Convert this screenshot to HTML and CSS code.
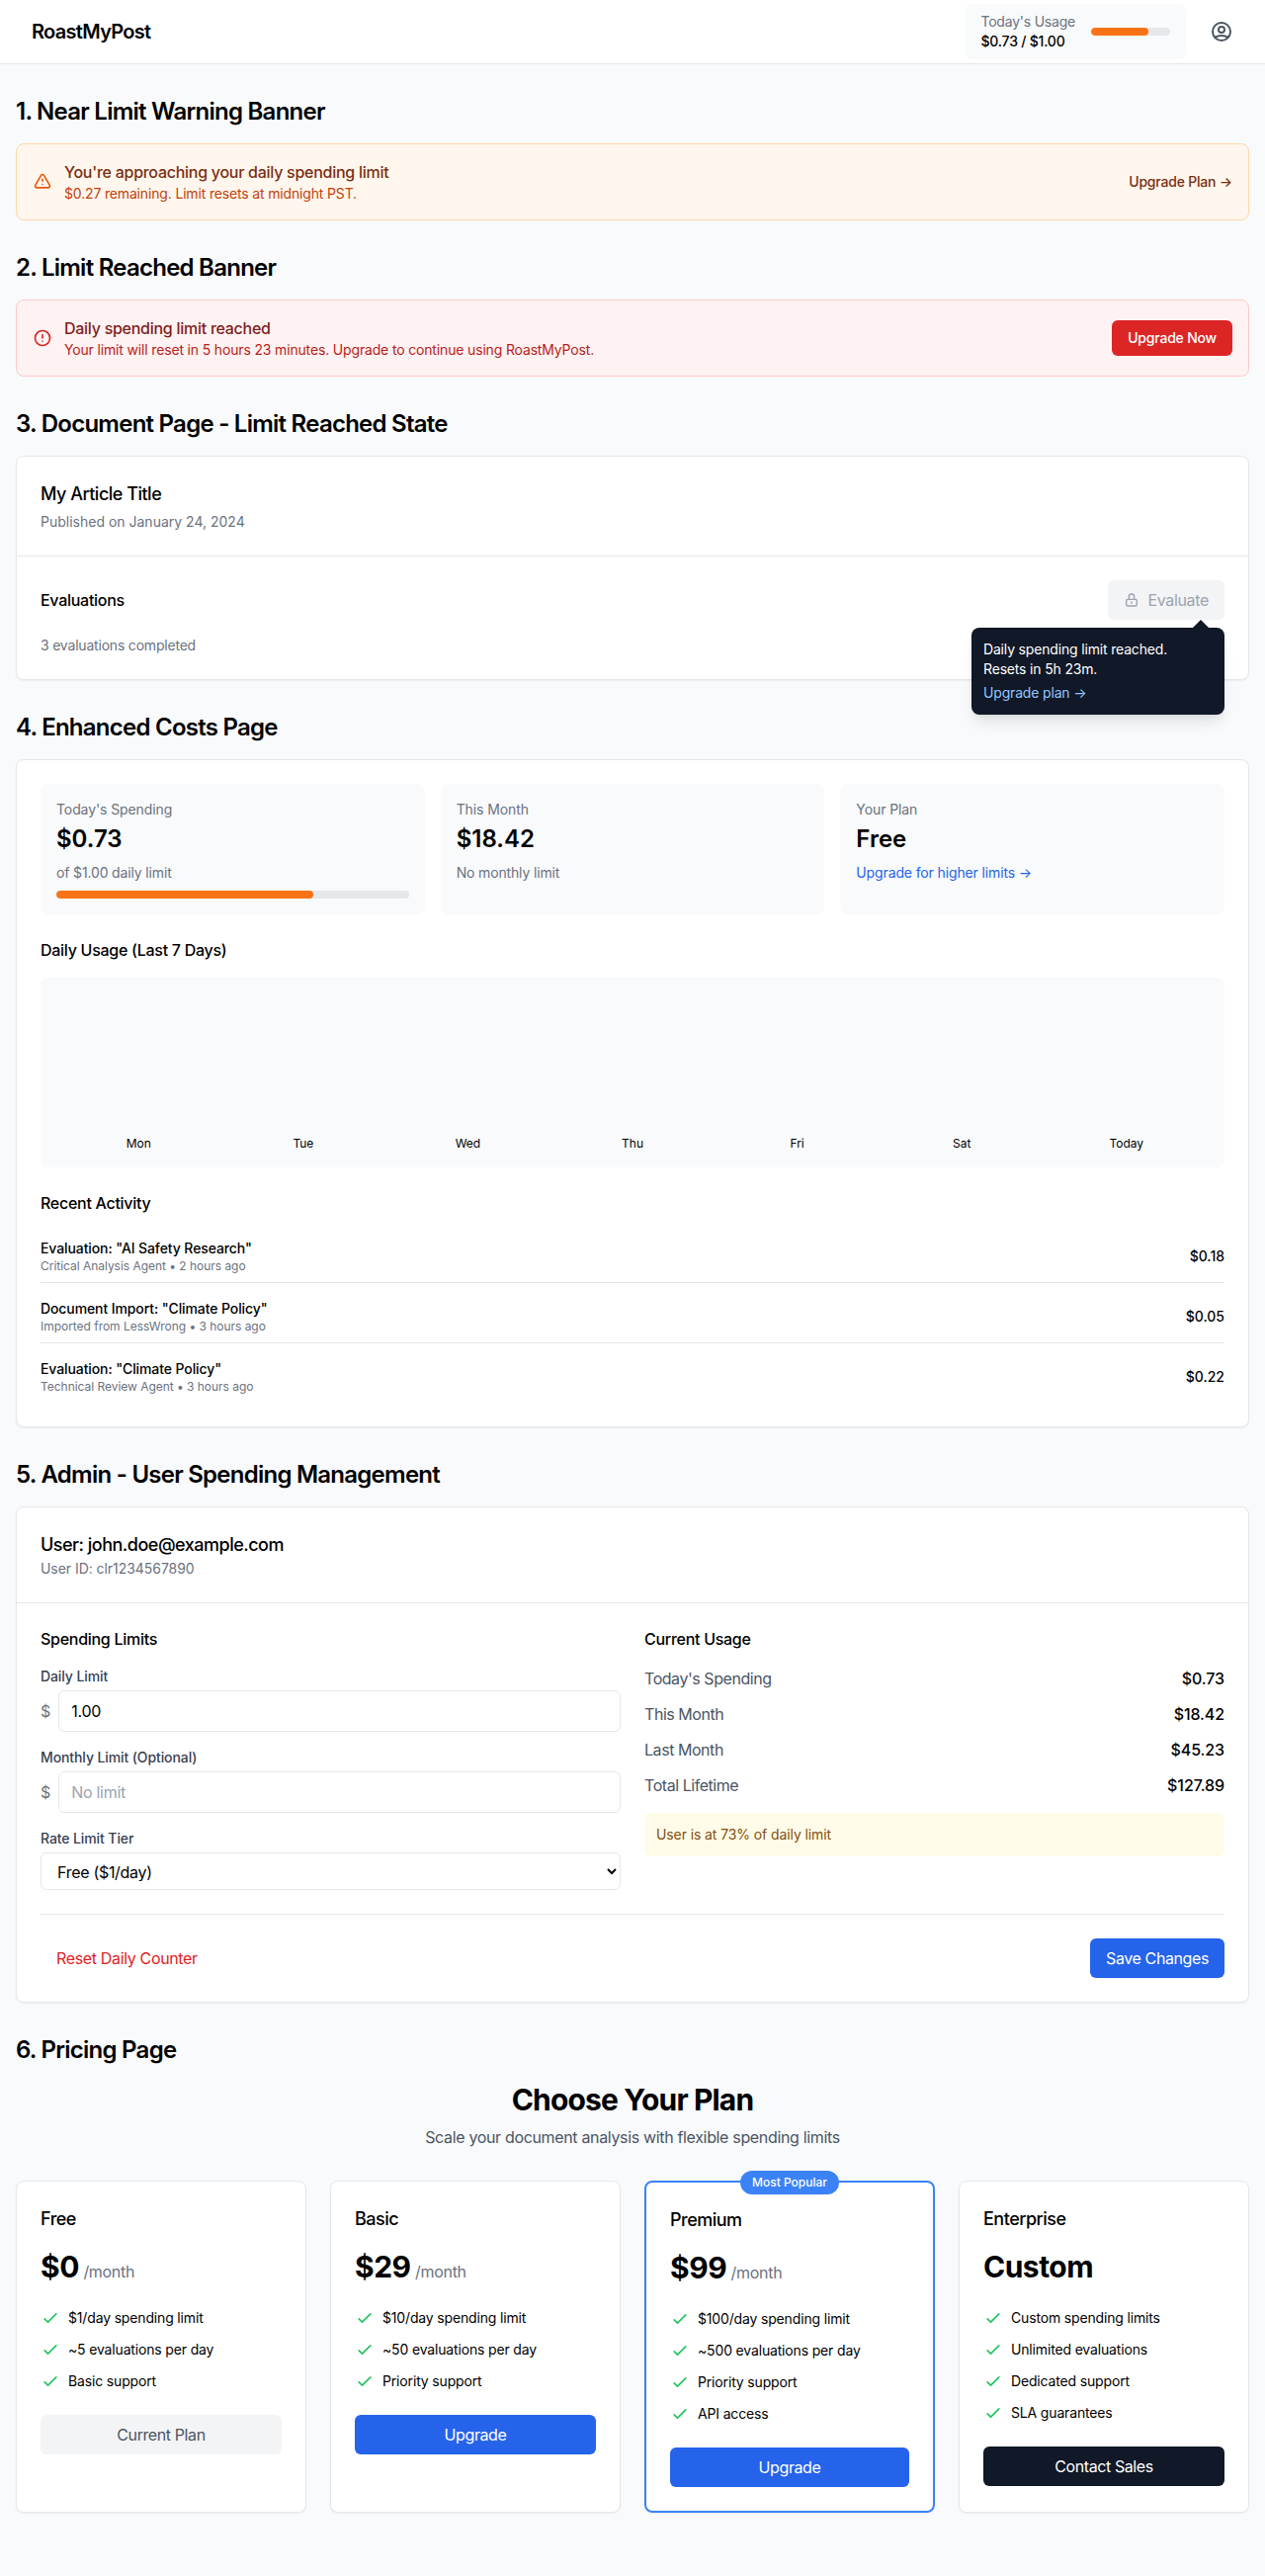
FILE: index.html
```html
<!DOCTYPE html>
<html lang="en">
<head>
<meta charset="utf-8">
<title>RoastMyPost</title>
<link rel="stylesheet" href="styles.css">
</head>
<body>
<header class="topbar">
  <div class="logo">RoastMyPost</div>
  <div class="topbar-right">
    <div class="usage">
      <div>
        <div class="usage-label">Today's Usage</div>
        <div class="usage-value">$0.73 / $1.00</div>
      </div>
      <div class="track track-small"><div class="fill"></div></div>
    </div>
    <svg class="icon-24 gray-icon" viewBox="0 0 24 24" fill="none" stroke="currentColor" stroke-width="2" stroke-linecap="round" stroke-linejoin="round"><path d="M5.121 17.804A13.937 13.937 0 0112 16c2.5 0 4.847.655 6.879 1.804M15 10a3 3 0 11-6 0 3 3 0 016 0zm6 2a9 9 0 11-18 0 9 9 0 0118 0z"/></svg>
  </div>
</header>

<main class="main">
  <section class="section">
    <h2 class="section-title">1. Near Limit Warning Banner</h2>
    <div class="banner banner-warn">
      <div class="banner-left">
        <svg class="icon-20 warn-icon" viewBox="0 0 24 24" fill="none" stroke="currentColor" stroke-width="2" stroke-linecap="round" stroke-linejoin="round"><path d="M12 9v2m0 4h.01m-6.938 4h13.856c1.54 0 2.502-1.667 1.732-3L13.732 4c-.77-1.333-2.694-1.333-3.464 0L3.34 16c-.77 1.333.192 3 1.732 3z"/></svg>
        <div>
          <div class="banner-title">You're approaching your daily spending limit</div>
          <div class="banner-desc">$0.27 remaining. Limit resets at midnight PST.</div>
        </div>
      </div>
      <a class="banner-link">Upgrade Plan →</a>
    </div>
  </section>

  <section class="section">
    <h2 class="section-title">2. Limit Reached Banner</h2>
    <div class="banner banner-error">
      <div class="banner-left">
        <svg class="icon-20 error-icon" viewBox="0 0 24 24" fill="none" stroke="currentColor" stroke-width="2" stroke-linecap="round" stroke-linejoin="round"><path d="M12 8v4m0 4h.01M21 12a9 9 0 11-18 0 9 9 0 0118 0z"/></svg>
        <div>
          <div class="banner-title">Daily spending limit reached</div>
          <div class="banner-desc">Your limit will reset in 5 hours 23 minutes. Upgrade to continue using RoastMyPost.</div>
        </div>
      </div>
      <button class="btn-small-red">Upgrade Now</button>
    </div>
  </section>

  <section class="section">
    <h2 class="section-title">3. Document Page - Limit Reached State</h2>
    <div class="card">
      <div class="card-head">
        <h3 class="title-lg">My Article Title</h3>
        <p class="published">Published on January 24, 2024</p>
      </div>
      <div class="card-body">
        <div class="eval-row">
          <h4 class="title-md">Evaluations</h4>
          <div class="eval-action">
            <button class="btn-disabled">
              <svg class="icon-16" viewBox="0 0 24 24" fill="none" stroke="currentColor" stroke-width="2" stroke-linecap="round" stroke-linejoin="round"><path d="M12 15v2m-6 4h12a2 2 0 002-2v-6a2 2 0 00-2-2H6a2 2 0 00-2 2v6a2 2 0 002 2zm10-10V7a4 4 0 00-8 0v4h8z"/></svg>
              Evaluate
            </button>
            <div class="tooltip">
              <div class="tooltip-arrow"></div>
              <p class="tooltip-text">Daily spending limit reached.<br>Resets in 5h 23m.</p>
              <a class="tooltip-link">Upgrade plan →</a>
            </div>
          </div>
        </div>
        <p class="eval-count">3 evaluations completed</p>
      </div>
    </div>
  </section>

  <section class="section">
    <h2 class="section-title">4. Enhanced Costs Page</h2>
    <div class="card card-pad">
      <div class="stats">
        <div class="stat">
          <div class="stat-label">Today's Spending</div>
          <div class="stat-value">$0.73</div>
          <div class="stat-sub">of $1.00 daily limit</div>
          <div class="track track-wide"><div class="fill"></div></div>
        </div>
        <div class="stat">
          <div class="stat-label">This Month</div>
          <div class="stat-value">$18.42</div>
          <div class="stat-sub">No monthly limit</div>
        </div>
        <div class="stat">
          <div class="stat-label">Your Plan</div>
          <div class="stat-value">Free</div>
          <a class="stat-link">Upgrade for higher limits →</a>
        </div>
      </div>

      <h3 class="title-md daily-title">Daily Usage (Last 7 Days)</h3>
      <div class="chart">
        <span>Mon</span><span>Tue</span><span>Wed</span><span>Thu</span><span>Fri</span><span>Sat</span><span>Today</span>
      </div>

      <h3 class="title-md recent-title">Recent Activity</h3>
      <div class="activity">
        <div class="activity-row">
          <div>
            <div class="activity-name">Evaluation: "AI Safety Research"</div>
            <div class="activity-meta">Critical Analysis Agent • 2 hours ago</div>
          </div>
          <div class="activity-cost">$0.18</div>
        </div>
        <div class="activity-row">
          <div>
            <div class="activity-name">Document Import: "Climate Policy"</div>
            <div class="activity-meta">Imported from LessWrong • 3 hours ago</div>
          </div>
          <div class="activity-cost">$0.05</div>
        </div>
        <div class="activity-row">
          <div>
            <div class="activity-name">Evaluation: "Climate Policy"</div>
            <div class="activity-meta">Technical Review Agent • 3 hours ago</div>
          </div>
          <div class="activity-cost">$0.22</div>
        </div>
      </div>
    </div>
  </section>

  <section class="section">
    <h2 class="section-title">5. Admin - User Spending Management</h2>
    <div class="card">
      <div class="card-head">
        <h3 class="title-lg">User: john.doe@example.com</h3>
        <p class="user-id">User ID: clr1234567890</p>
      </div>
      <div class="card-body">
        <div class="admin-grid">
          <div>
            <h4 class="title-md limits-title">Spending Limits</h4>
            <div class="field">
              <label class="field-label">Daily Limit</label>
              <div class="money"><span class="dollar">$</span><input class="input" type="text" value="1.00"></div>
            </div>
            <div class="field">
              <label class="field-label">Monthly Limit (Optional)</label>
              <div class="money"><span class="dollar">$</span><input class="input" type="text" placeholder="No limit"></div>
            </div>
            <div class="field">
              <label class="field-label">Rate Limit Tier</label>
              <select class="select"><option>Free ($1/day)</option></select>
            </div>
          </div>
          <div>
            <h4 class="title-md limits-title">Current Usage</h4>
            <div class="usage-rows">
              <div class="usage-row"><span class="usage-key">Today's Spending</span><span class="usage-num">$0.73</span></div>
              <div class="usage-row"><span class="usage-key">This Month</span><span class="usage-num">$18.42</span></div>
              <div class="usage-row"><span class="usage-key">Last Month</span><span class="usage-num">$45.23</span></div>
              <div class="usage-row"><span class="usage-key">Total Lifetime</span><span class="usage-num">$127.89</span></div>
            </div>
            <div class="notice">User is at 73% of daily limit</div>
          </div>
        </div>
        <div class="admin-actions">
          <button class="btn-ghost-red">Reset Daily Counter</button>
          <button class="btn btn-blue btn-auto">Save Changes</button>
        </div>
      </div>
    </div>
  </section>

  <section class="section">
    <h2 class="section-title">6. Pricing Page</h2>
    <div class="pricing-head">
      <h3 class="pricing-title">Choose Your Plan</h3>
      <p class="pricing-sub">Scale your document analysis with flexible spending limits</p>
    </div>
    <div class="plans">
      <div class="plan">
        <h4 class="title-lg">Free</h4>
        <div class="price"><span class="price-num">$0</span> <span class="price-unit">/month</span></div>
        <ul class="features">
          <li><svg class="icon-20 check" viewBox="0 0 24 24" fill="none" stroke="currentColor" stroke-width="2" stroke-linecap="round" stroke-linejoin="round"><path d="M5 13l4 4L19 7"/></svg>$1/day spending limit</li>
          <li><svg class="icon-20 check" viewBox="0 0 24 24" fill="none" stroke="currentColor" stroke-width="2" stroke-linecap="round" stroke-linejoin="round"><path d="M5 13l4 4L19 7"/></svg>~5 evaluations per day</li>
          <li><svg class="icon-20 check" viewBox="0 0 24 24" fill="none" stroke="currentColor" stroke-width="2" stroke-linecap="round" stroke-linejoin="round"><path d="M5 13l4 4L19 7"/></svg>Basic support</li>
        </ul>
        <button class="btn btn-gray">Current Plan</button>
      </div>
      <div class="plan">
        <h4 class="title-lg">Basic</h4>
        <div class="price"><span class="price-num">$29</span> <span class="price-unit">/month</span></div>
        <ul class="features">
          <li><svg class="icon-20 check" viewBox="0 0 24 24" fill="none" stroke="currentColor" stroke-width="2" stroke-linecap="round" stroke-linejoin="round"><path d="M5 13l4 4L19 7"/></svg>$10/day spending limit</li>
          <li><svg class="icon-20 check" viewBox="0 0 24 24" fill="none" stroke="currentColor" stroke-width="2" stroke-linecap="round" stroke-linejoin="round"><path d="M5 13l4 4L19 7"/></svg>~50 evaluations per day</li>
          <li><svg class="icon-20 check" viewBox="0 0 24 24" fill="none" stroke="currentColor" stroke-width="2" stroke-linecap="round" stroke-linejoin="round"><path d="M5 13l4 4L19 7"/></svg>Priority support</li>
        </ul>
        <button class="btn btn-blue">Upgrade</button>
      </div>
      <div class="plan plan-featured">
        <div class="badge">Most Popular</div>
        <h4 class="title-lg">Premium</h4>
        <div class="price"><span class="price-num">$99</span> <span class="price-unit">/month</span></div>
        <ul class="features">
          <li><svg class="icon-20 check" viewBox="0 0 24 24" fill="none" stroke="currentColor" stroke-width="2" stroke-linecap="round" stroke-linejoin="round"><path d="M5 13l4 4L19 7"/></svg>$100/day spending limit</li>
          <li><svg class="icon-20 check" viewBox="0 0 24 24" fill="none" stroke="currentColor" stroke-width="2" stroke-linecap="round" stroke-linejoin="round"><path d="M5 13l4 4L19 7"/></svg>~500 evaluations per day</li>
          <li><svg class="icon-20 check" viewBox="0 0 24 24" fill="none" stroke="currentColor" stroke-width="2" stroke-linecap="round" stroke-linejoin="round"><path d="M5 13l4 4L19 7"/></svg>Priority support</li>
          <li><svg class="icon-20 check" viewBox="0 0 24 24" fill="none" stroke="currentColor" stroke-width="2" stroke-linecap="round" stroke-linejoin="round"><path d="M5 13l4 4L19 7"/></svg>API access</li>
        </ul>
        <button class="btn btn-blue">Upgrade</button>
      </div>
      <div class="plan">
        <h4 class="title-lg">Enterprise</h4>
        <div class="price"><span class="price-num">Custom</span></div>
        <ul class="features">
          <li><svg class="icon-20 check" viewBox="0 0 24 24" fill="none" stroke="currentColor" stroke-width="2" stroke-linecap="round" stroke-linejoin="round"><path d="M5 13l4 4L19 7"/></svg>Custom spending limits</li>
          <li><svg class="icon-20 check" viewBox="0 0 24 24" fill="none" stroke="currentColor" stroke-width="2" stroke-linecap="round" stroke-linejoin="round"><path d="M5 13l4 4L19 7"/></svg>Unlimited evaluations</li>
          <li><svg class="icon-20 check" viewBox="0 0 24 24" fill="none" stroke="currentColor" stroke-width="2" stroke-linecap="round" stroke-linejoin="round"><path d="M5 13l4 4L19 7"/></svg>Dedicated support</li>
          <li><svg class="icon-20 check" viewBox="0 0 24 24" fill="none" stroke="currentColor" stroke-width="2" stroke-linecap="round" stroke-linejoin="round"><path d="M5 13l4 4L19 7"/></svg>SLA guarantees</li>
        </ul>
        <button class="btn btn-dark">Contact Sales</button>
      </div>
    </div>
  </section>
</main>
</body>
</html>
```
FILE: styles.css
```css
* { box-sizing: border-box; }
html, body { margin: 0; padding: 0; }
body {
  background: #f9fafb;
  color: #000;
  font-family: Inter, "Liberation Sans", sans-serif;
  font-size: 16px;
  line-height: 24px;
  min-height: 2606px;
}
h2, h3, h4, p, ul { margin: 0; padding: 0; }
button { font-family: inherit; cursor: pointer; }

.topbar {
  height: 65px;
  background: #fff;
  border-bottom: 1px solid #e5e7eb;
  padding: 0 32px;
  display: flex;
  align-items: center;
  justify-content: space-between;
}
.logo { font-size: 20px; line-height: 28px; font-weight: 600; letter-spacing: -.7px; }
.topbar-right { display: flex; align-items: center; gap: 24px; }
.usage {
  display: flex;
  align-items: center;
  gap: 16px;
  background: #f9fafb;
  border-radius: 8px;
  padding: 8px 16px;
}
.usage-label { font-size: 14px; line-height: 20px; color: #6b7280; letter-spacing: -.22px; }
.usage-value { font-size: 14px; line-height: 20px; font-weight: 500; letter-spacing: -.2px; }
.track { height: 8px; border-radius: 9999px; background: #e5e7eb; overflow: hidden; }
.track-small { width: 80px; }
.track-wide { margin-top: 8px; }
.fill { width: 73%; height: 100%; background: #f97316; border-radius: 9999px; }
.icon-24 { width: 24px; height: 24px; display: block; }
.icon-20 { width: 20px; height: 20px; display: block; flex: none; }
.icon-16 { width: 16px; height: 16px; display: block; flex: none; }
.gray-icon { color: #4b5563; }

.main { padding: 32px 16px; display: flex; flex-direction: column; gap: 32px; }
.section-title { font-size: 24px; line-height: 32px; font-weight: 600; margin-bottom: 16px; letter-spacing: -.75px; }

.banner {
  display: flex;
  align-items: center;
  justify-content: space-between;
  padding: 16px;
  border: 1px solid;
  border-radius: 8px;
}
.banner-left { display: flex; align-items: center; gap: 12px; }
.banner-title { font-size: 16px; line-height: 24px; font-weight: 500; letter-spacing: -.27px; }
.banner-desc { font-size: 14px; line-height: 20px; letter-spacing: -.16px; }
.banner-warn { background: #fff7ed; border-color: #fed7aa; }
.banner-warn .banner-title { color: #7c2d12; }
.banner-warn .banner-desc { color: #c2410c; }
.warn-icon { color: #ea580c; }
.banner-error { background: #fef2f2; border-color: #fecaca; }
.banner-error .banner-title { color: #7f1d1d; }
.banner-error .banner-desc { color: #b91c1c; }
.error-icon { color: #dc2626; }
.banner-link { font-size: 14px; line-height: 20px; font-weight: 500; color: #7c2d12; letter-spacing: -.2px; }
.btn-small-red {
  background: #dc2626;
  color: #fff;
  border: 0;
  border-radius: 6px;
  padding: 8px 16px;
  font-size: 14px;
  line-height: 20px;
  font-weight: 500;
  letter-spacing: -.2px;
}

.card {
  background: #fff;
  border: 1px solid #e5e7eb;
  border-radius: 8px;
  box-shadow: 0 1px 2px rgba(0, 0, 0, .05);
}
.card-pad { padding: 24px; }
.card-head { padding: 24px; border-bottom: 1px solid #e5e7eb; }
.card-body { padding: 24px; }
.title-lg { font-size: 18px; line-height: 28px; font-weight: 500; letter-spacing: -.5px; }
.title-md { font-size: 16px; line-height: 24px; font-weight: 500; letter-spacing: -.28px; }
.published { font-size: 14px; line-height: 20px; color: #6b7280; margin-top: 4px; }
.user-id { font-size: 14px; line-height: 20px; color: #6b7280; letter-spacing: -.05px; }

.eval-row { display: flex; align-items: center; justify-content: space-between; }
.eval-action { position: relative; }
.btn-disabled {
  display: flex;
  align-items: center;
  gap: 8px;
  background: #f3f4f6;
  color: #9ca3af;
  border: 0;
  border-radius: 6px;
  padding: 8px 16px;
  font-size: 16px;
  line-height: 24px;
  font-weight: 400;
  letter-spacing: -.33px;
}
.eval-count { font-size: 14px; line-height: 20px; color: #6b7280; margin-top: 16px; letter-spacing: -.2px; }
.tooltip {
  position: absolute;
  top: calc(100% + 8px);
  right: 0;
  width: 256px;
  padding: 12px;
  background: #111827;
  border-radius: 8px;
  box-shadow: 0 10px 15px -3px rgba(0, 0, 0, .1), 0 4px 6px -4px rgba(0, 0, 0, .1);
  z-index: 2;
}
.tooltip-arrow {
  position: absolute;
  top: -8px;
  right: 16px;
  width: 0;
  height: 0;
  border-left: 8px solid transparent;
  border-right: 8px solid transparent;
  border-bottom: 8px solid #111827;
}
.tooltip-text { font-size: 14px; line-height: 20px; color: #fff; letter-spacing: -.17px; }
.tooltip-link { display: block; margin-top: 4px; font-size: 14px; line-height: 20px; color: #93c5fd; letter-spacing: -.17px; }

.stats { display: grid; grid-template-columns: repeat(3, 1fr); gap: 16px; }
.stat { background: #f9fafb; border-radius: 8px; padding: 16px; }
.stat-label { font-size: 14px; line-height: 20px; color: #6b7280; letter-spacing: -.1px; }
.stat-value { font-size: 24px; line-height: 32px; font-weight: 600; margin-top: 4px; }
.stat-sub { font-size: 14px; line-height: 20px; color: #6b7280; margin-top: 8px; letter-spacing: -.15px; }
.stat-link { display: block; font-size: 14px; line-height: 20px; color: #2563eb; margin-top: 8px; letter-spacing: -.13px; }
.daily-title { margin-top: 24px; }
.chart {
  height: 192px;
  margin-top: 16px;
  padding: 16px;
  background: #f9fafb;
  border-radius: 8px;
  display: flex;
  align-items: flex-end;
}
.chart span { flex: 1; text-align: center; font-size: 12px; line-height: 16px; }
.recent-title { margin-top: 24px; }
.activity { margin-top: 16px; display: flex; flex-direction: column; gap: 8px; }
.activity-row {
  display: flex;
  align-items: center;
  justify-content: space-between;
  padding: 8px 0;
  border-bottom: 1px solid #e5e7eb;
}
.activity-row:last-child { border-bottom: 0; }
.activity-name { font-size: 14px; line-height: 20px; font-weight: 500; letter-spacing: -.1px; }
.activity-meta { font-size: 12px; line-height: 16px; color: #6b7280; letter-spacing: -.03px; }
.activity-cost { font-size: 14px; line-height: 20px; font-weight: 500; }

.admin-grid { display: grid; grid-template-columns: 1fr 1fr; gap: 24px; }
.limits-title { margin-bottom: 16px; }
.field { margin-bottom: 16px; }
.field:last-child { margin-bottom: 0; }
.field-label { display: block; font-size: 14px; line-height: 20px; font-weight: 500; color: #374151; margin-bottom: 4px; letter-spacing: -.1px; }
.money { display: flex; align-items: center; gap: 8px; }
.dollar { color: #6b7280; }
.input {
  flex: 1;
  min-width: 0;
  height: 42px;
  padding: 8px 12px;
  border: 1px solid #e5e7eb;
  border-radius: 6px;
  background: #fff;
  font: 16px/24px Inter, "Liberation Sans", sans-serif;
  letter-spacing: -.3px;
  color: #000;
}
.input::placeholder { color: #9ca3af; }
.select {
  display: block;
  width: 100%;
  height: 38px;
  padding: 8px 12px;
  border: 1px solid #e5e7eb;
  border-radius: 6px;
  background: #fff;
  font-family: inherit;
  font-size: 16px;
  letter-spacing: -.3px;
  color: #000;
}
.usage-rows { display: flex; flex-direction: column; gap: 12px; }
.usage-row { display: flex; justify-content: space-between; }
.usage-key { color: #4b5563; letter-spacing: -.45px; }
.usage-num { font-weight: 500; letter-spacing: -.1px; }
.notice {
  margin-top: 16px;
  padding: 12px;
  background: #fefce8;
  border-radius: 6px;
  font-size: 14px;
  line-height: 20px;
  color: #854d0e;
  letter-spacing: -.1px;
}
.admin-actions {
  display: flex;
  justify-content: space-between;
  margin-top: 24px;
  padding-top: 24px;
  border-top: 1px solid #e5e7eb;
}
.btn-ghost-red {
  background: none;
  border: 0;
  padding: 8px 16px;
  color: #e11d26;
  font-size: 16px;
  line-height: 24px;
  letter-spacing: -.35px;
}

.pricing-head { text-align: center; margin-bottom: 32px; }
.pricing-title { font-size: 30px; line-height: 36px; font-weight: 700; letter-spacing: -.85px; }
.pricing-sub { margin-top: 8px; color: #4b5563; letter-spacing: -.34px; }
.plans { display: grid; grid-template-columns: repeat(4, 1fr); gap: 24px; }
.plan {
  position: relative;
  background: #fff;
  border: 1px solid #e5e7eb;
  border-radius: 8px;
  box-shadow: 0 1px 2px rgba(0, 0, 0, .05);
  padding: 24px;
}
.plan-featured { border: 2px solid #3b82f6; }
.badge {
  position: absolute;
  top: -12px;
  left: 50%;
  transform: translateX(-50%);
  background: #3b82f6;
  color: #fff;
  border-radius: 9999px;
  padding: 4px 12px;
  font-size: 12px;
  line-height: 16px;
  font-weight: 500;
  white-space: nowrap;
}
.price { margin-top: 16px; }
.price-num { font-size: 30px; line-height: 36px; font-weight: 700; letter-spacing: -.5px; }
.price-unit { color: #6b7280; letter-spacing: -.3px; }
.features { list-style: none; margin-top: 24px; display: flex; flex-direction: column; gap: 12px; }
.features li { display: flex; align-items: center; gap: 8px; font-size: 14px; line-height: 20px; letter-spacing: -.16px; }
.check { color: #22c55e; }
.btn {
  display: block;
  width: 100%;
  margin-top: 24px;
  padding: 8px 16px;
  border: 0;
  border-radius: 6px;
  font-size: 16px;
  line-height: 24px;
  font-weight: 400;
  letter-spacing: -.4px;
}
.btn-auto { width: auto; margin-top: 0; }
.btn-blue { background: #2563eb; color: #fff; }
.btn-gray { background: #f3f4f6; color: #4b5563; }
.btn-dark { background: #111827; color: #fff; }
```
